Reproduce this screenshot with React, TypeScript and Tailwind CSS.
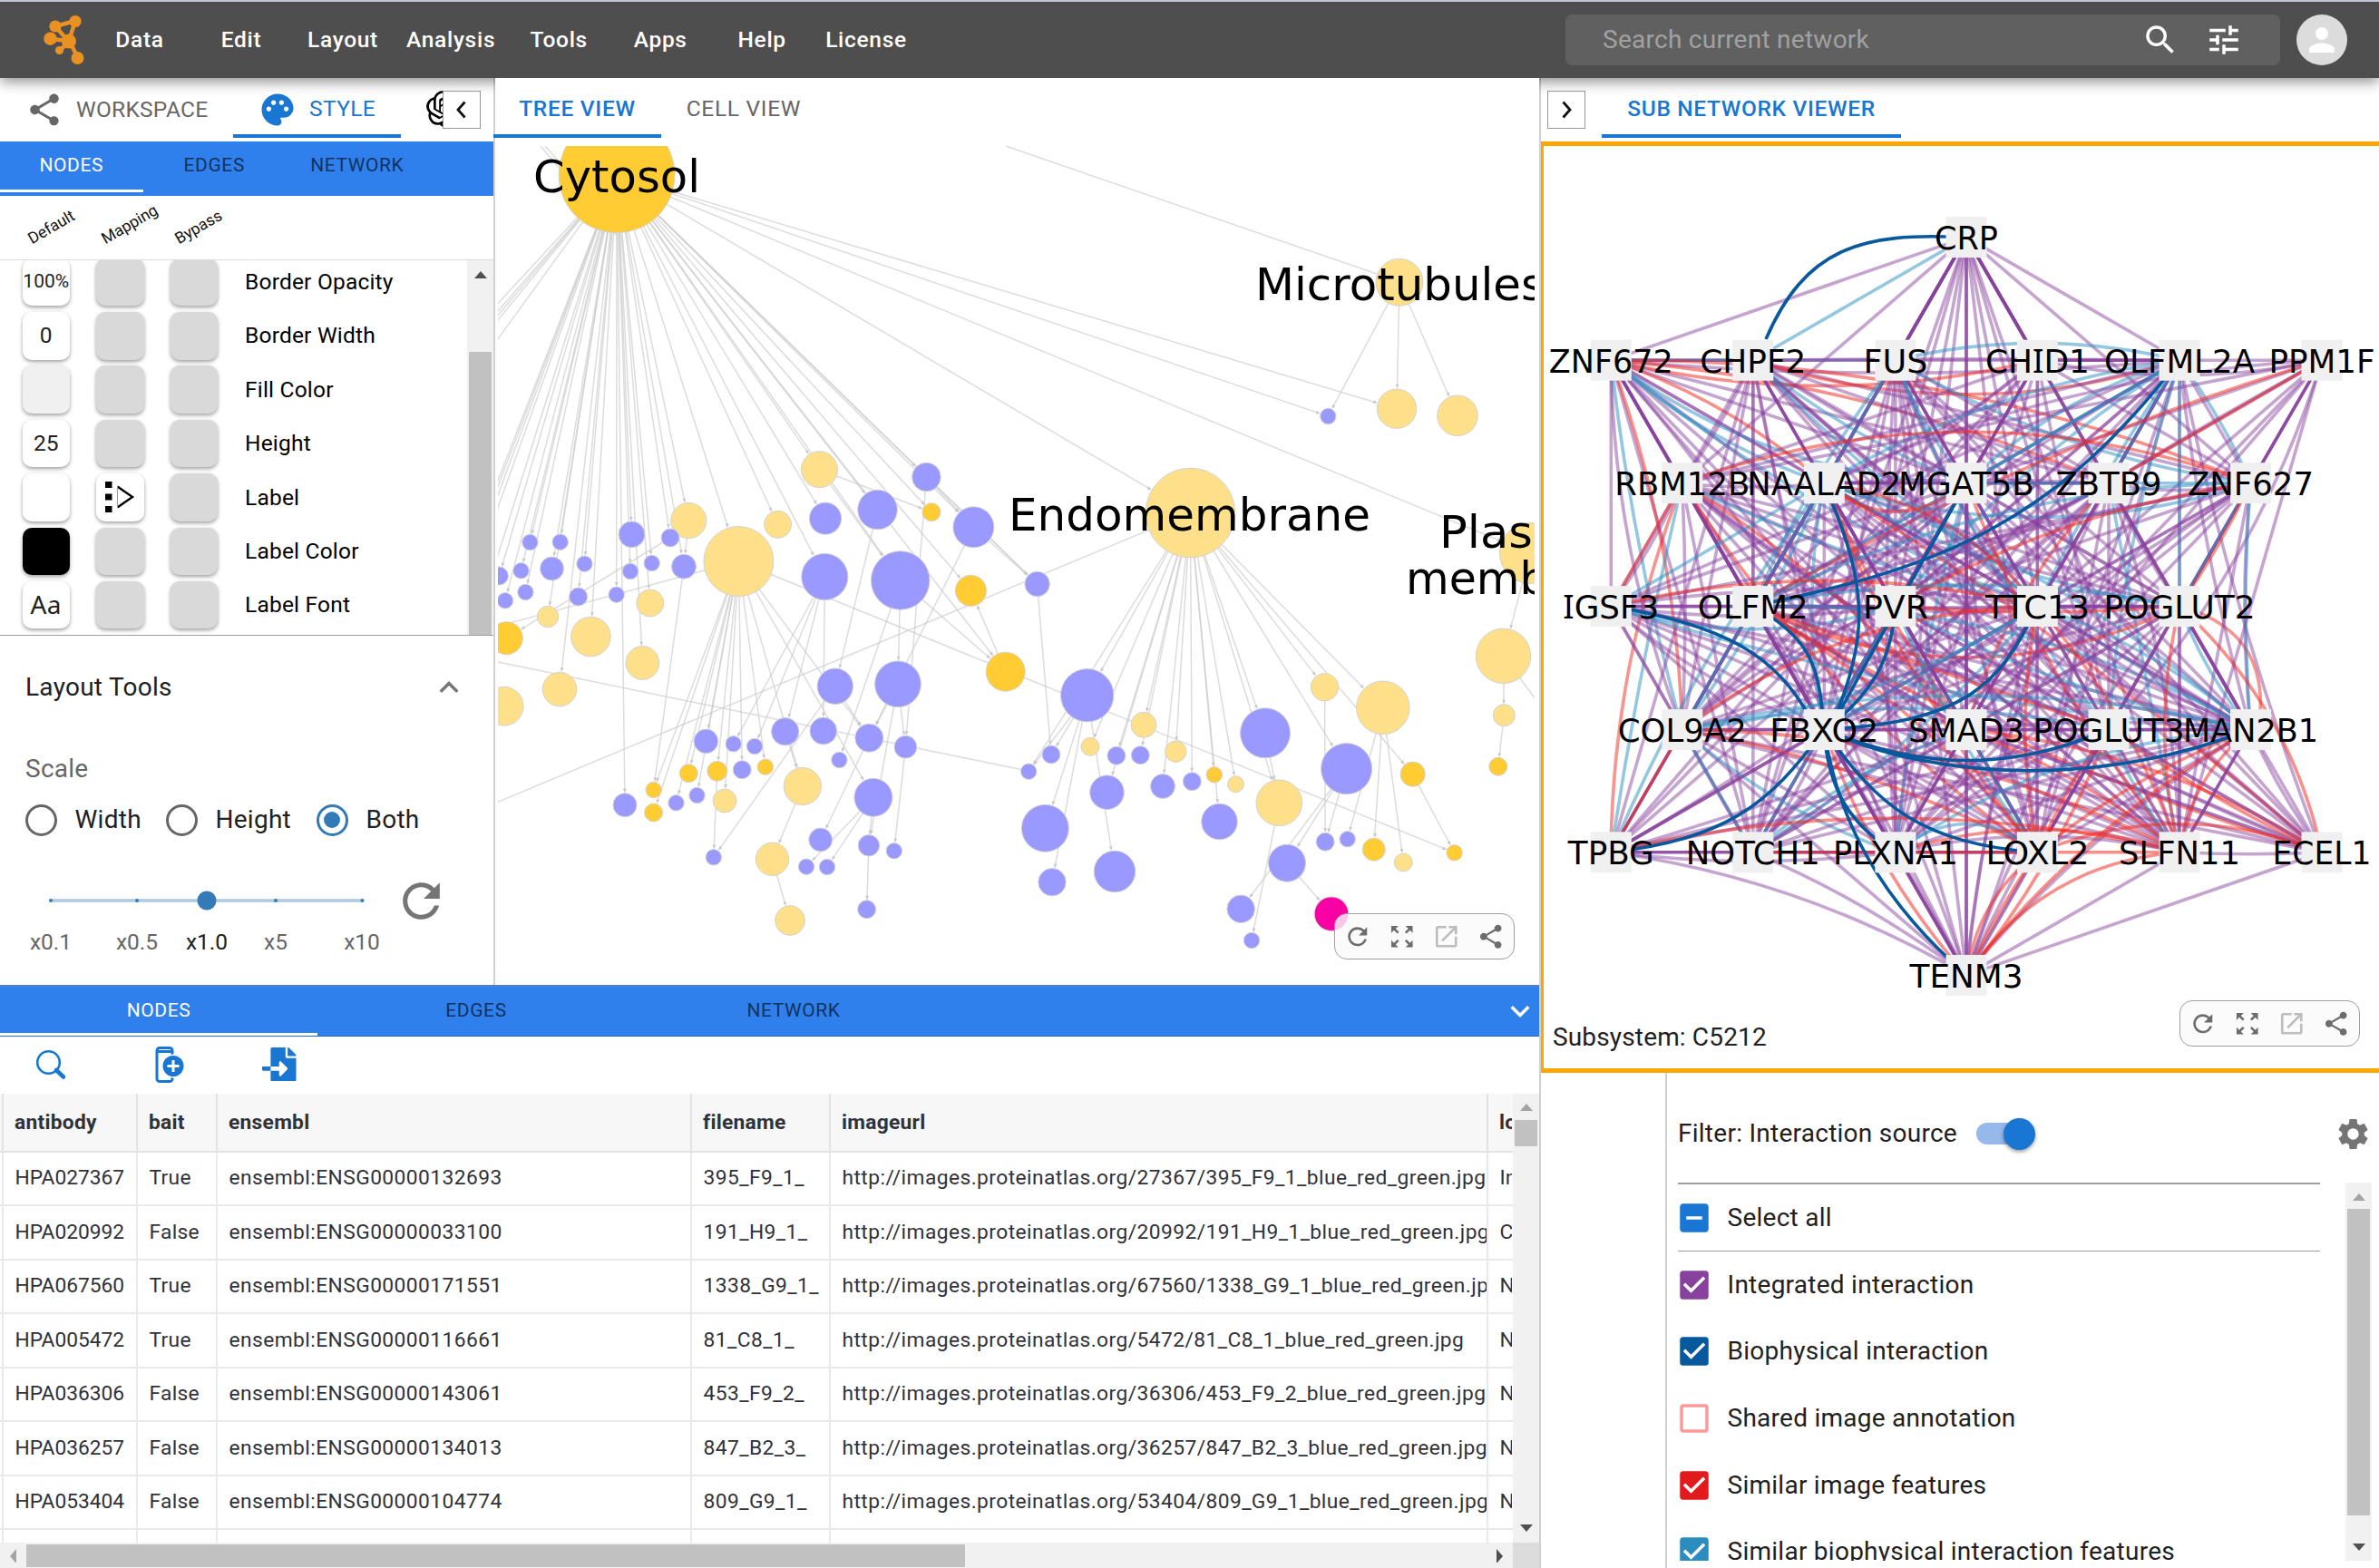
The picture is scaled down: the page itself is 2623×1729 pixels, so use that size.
import React from "react";
import {
  MdShare, MdPalette, MdSearch, MdTune, MdPerson, MdRefresh, MdZoomOutMap, MdOpenInNew, MdSettings,
  MdCheckBox, MdIndeterminateCheckBox, MdCheckBoxOutlineBlank, MdExpandLess, MdExpandMore,
} from "react-icons/md";
import { SiOpenai } from "react-icons/si";
import { FaFileImport } from "react-icons/fa";

/* ------------------------------------------------------------------ tree */

const P = "#9999ff";
const Y = "#fee08b";
const O = "#ffcc33";
const M = "#f800a3";

type TreeNode = [string, number, number, number, string];

const treeNodes: TreeNode[] = [
  ["cyt", 680, 192.7, 64, O], ["a1", 903.5, 517.7, 20, Y], ["a2", 1021.4, 526, 15.8, P], ["a3", 967.5, 562, 21.8, P],
  ["a4", 1027, 564.7, 10, O], ["a5", 1073.4, 581.3, 22.5, P], ["a6", 910, 571.7, 17.6, P], ["a7", 857.6, 578.3, 15, Y],
  ["a8", 759.3, 574, 19.6, Y], ["a9", 739, 593, 10, P], ["a10", 696.5, 589.3, 14.4, P], ["a11", 584.4, 598, 8.7, P],
  ["a12", 617.7, 597.7, 8.7, P], ["big", 814.4, 619, 38.5, Y],
  ["b1", 550.4, 635, 10, P], ["b2", 574.5, 629.3, 8.7, P], ["b3", 608.5, 627, 13, P], ["b4", 644.5, 621.7, 8.7, P],
  ["b5", 695, 630, 8.7, P], ["b6", 718.7, 621, 8.7, P], ["b7", 754, 624.7, 13.5, P], ["b8", 557, 662.3, 8.7, P],
  ["b9", 579.4, 653, 8.7, P], ["b10", 637.6, 658, 10, P], ["b11", 679.7, 655.7, 8.7, P], ["b12", 604, 680, 11.7, Y],
  ["b13", 558.4, 703.7, 18, O], ["b14", 651.4, 702, 21.8, Y], ["b15", 716.8, 665, 15, Y], ["b16", 708.4, 731, 18.4, Y],
  ["b17", 617, 760, 18.8, Y], ["b18", 555.8, 778.7, 21.3, Y], ["c1", 689, 887.7, 13, P], ["c2", 720.6, 871, 8.7, O],
  ["c3", 720.6, 896, 10, O], ["c4", 745.5, 885.3, 8.7, P], ["c5", 759.3, 852.7, 10, O], ["c6", 768.5, 877, 8.7, P],
  ["c7", 778.4, 817.3, 13.3, P], ["c8", 790.7, 850.3, 10.9, O], ["c9", 799, 883, 13, Y], ["c10", 808.7, 820.3, 8.7, P],
  ["c11", 818.2, 848.7, 10, P], ["c12", 832, 823, 8.7, P], ["c13", 843.9, 845.7, 8.7, O], ["c14", 865.7, 806.7, 15.2, P],
  ["c15", 907.8, 806, 14.9, P], ["c16", 925.4, 838, 8.7, P], ["c17", 884.8, 867, 20.6, Y], ["c18", 786.8, 945.3, 8.7, P],
  ["c19", 904.7, 926, 12.9, P], ["c20", 889, 955.7, 8.7, P], ["c21", 912, 956, 8.7, P], ["c22", 851.5, 947.3, 18.2, Y],
  ["c23", 871, 1015, 16.4, Y], ["c24", 955.6, 1002.7, 10, P], ["c25", 957.9, 932.3, 11.7, P], ["c26", 985.8, 938.3, 8.7, P],
  ["c27", 962.9, 879.3, 21, P], ["c28", 958.3, 813.7, 15.5, P], ["c29", 998.4, 823.7, 12.4, P], ["c30", 920.8, 756.7, 19.7, P],
  ["c31", 990, 754.3, 25.4, P], ["c32", 909.3, 636, 25.6, P], ["c33", 992.7, 640, 32.3, P], ["c34", 1070.4, 651.3, 17, O],
  ["c35", 1108.7, 740.7, 21.5, O], ["c36", 1134.2, 850.7, 8.7, P], ["d1", 1143.6, 644, 13.7, P], ["d2", 1198.7, 766.7, 29.2, P],
  ["d3", 1159, 832, 9.9, P], ["d4", 1202, 823.3, 10, Y], ["d5", 1230.9, 833.3, 10, P], ["d6", 1257.3, 832.7, 10, P],
  ["d7", 1261, 799.3, 14, Y], ["d8", 1220.5, 873.7, 18.8, P], ["d9", 1296.3, 828.7, 11.7, Y], ["d10", 1282, 867, 13.5, P],
  ["d11", 1314.3, 861.7, 10, P], ["d12", 1338.8, 854.3, 8.7, O], ["d13", 1362.5, 864.7, 9, Y], ["d14", 1152.4, 913.3, 26, P],
  ["d15", 1160, 972.7, 15.2, P], ["d16", 1229, 961, 22.8, P], ["d17", 1344.5, 906, 19.8, P], ["d18", 1395, 808.3, 27.5, P],
  ["d19", 1410.3, 885.3, 25.3, Y], ["d20", 1460.5, 757.7, 15.2, Y], ["d21", 1524.8, 780.3, 29.3, Y], ["d22", 1484.6, 847.7, 28.1, P],
  ["d23", 1461.2, 928.3, 10, P], ["d24", 1485.7, 925.3, 8.7, P], ["d25", 1557.7, 853.7, 13.6, O], ["d26", 1514.8, 936.7, 12.5, O],
  ["d27", 1547.3, 951, 10, Y], ["d28", 1603.6, 940.3, 8.7, O], ["d29", 1419, 951.7, 20.5, P], ["d30", 1468, 1007.7, 18.8, M],
  ["d31", 1368.2, 1002.3, 15.3, P], ["d32", 1380, 1037, 8.7, P], ["e1", 1657.5, 723.3, 30.2, Y], ["e2", 1658.3, 788.7, 12, Y],
  ["e3", 1651.8, 845.3, 10, O], ["mic", 1543, 311.3, 26, Y], ["f1", 1464.3, 459, 8.7, P], ["f2", 1540, 450.7, 21.7, Y],
  ["f3", 1607, 458.3, 22.3, Y], ["endo", 1312.4, 565.5, 49.3, Y], ["pla", 1687, 610, 33.5, Y],
];

const treeEdges: [string, string][] = [
  ["cyt", "a1 a2 a3 a4 a5 a6 a7 a8 a9 a10 a11 a12 big b1 b2 b3 b4 b5 b6 b7 b8 b9 b10 b11 b12 b14 b15 b16 b17 c1 c32 c33 c34 c35 endo pla f1 f2 d1"],
  ["a1", "a4 c33"], ["a2", "a5 d1 c29"], ["a5", "d1 c28"], ["a3", "c30"], ["a9", "b13"], ["a8", "b7"], ["b7", "c2"],
  ["big", "c2 c3 c4 c5 c6 c7 c8 c9 c11 c13 c17 c27 c28 d28"], ["c32", "c10 c12 c14 c15"], ["c33", "c31 c16 c35"],
  ["c30", "c28 c18"], ["c31", "c25 c29 c28"], ["c27", "c20 c21 c25"], ["c25", "c24"], ["c14", "c17"], ["c17", "c22"],
  ["c22", "c23"], ["c8", "c18"], ["c28", "c19"], ["c29", "c26"], ["c35", "c34"], ["d1", "d3"],
  ["endo", "d2 c36 d4 d5 d8 d7 d6 d10 d9 d11 d12 d17 d13 d18 d19 d22 d20 d21 d25"], ["d2", "c36 d3 d14 d15 d16"],
  ["d18", "d19"], ["d19", "d32"], ["d22", "d29 d23 d31"], ["d20", "d23"], ["d21", "d24 d26 d27"], ["d25", "d28"],
  ["d29", "d30"], ["mic", "f1 f2 f3"], ["pla", "e1"], ["e1", "e2"], ["e2", "e3"],
];

/* Edges whose other end lies outside the viewport. */
const looseEdges = [
  [680, 193, 530, 355], [680, 193, 530, 365], [680, 193, 530, 370], [680, 193, 530, 376], [680, 193, 530, 400],
  [680, 193, 540, 553], [680, 193, 540, 560], [680, 193, 540, 570], [680, 193, 540, 585], [680, 193, 545, 625],
  [596, 161, 680, 260], [601, 161, 680, 250], [814, 619, 540, 693], [549, 730, 1126, 848.5], [1312, 565.5, 540, 888],
  [1657, 723, 1700, 780], [1109, 161, 1518, 302],
];

const byId = new Map(treeNodes.map((n) => [n[0], n]));

function TreeGraph() {
  const lines: React.ReactNode[] = [];
  treeEdges.forEach(([from, targets]) => {
    const s = byId.get(from)!;
    targets.split(" ").forEach((id) => {
      const t = byId.get(id)!;
      const dx = t[1] - s[1];
      const dy = t[2] - s[2];
      const len = Math.hypot(dx, dy);
      const ux = dx / len;
      const uy = dy / len;
      const tx = t[1] - ux * (t[3] + 1);
      const ty = t[2] - uy * (t[3] + 1);
      const bx = tx - ux * 4;
      const by = ty - uy * 4;
      lines.push(
        <g key={from + id}>
          <line x1={s[1]} y1={s[2]} x2={tx} y2={ty} />
          <path d={`M${tx} ${ty}L${bx - uy * 2} ${by + ux * 2}L${bx + uy * 2} ${by - ux * 2}Z`} fill="#c8c8c8" stroke="none" />
        </g>,
      );
    });
  });
  return (
    <svg className="block h-[925px] w-[1143px]" viewBox="549 161 1143 925">
      <g stroke="#cccccc" strokeOpacity={0.68} strokeWidth={1.5}>
        {lines}
        {looseEdges.map(([a, b, c, d], i) => <line key={i} x1={a} y1={b} x2={c} y2={d} />)}
      </g>
      {treeNodes.map(([id, x, y, r, c]) => <circle key={id} cx={x} cy={y} r={r} fill={c} stroke="#d2d2d2" strokeWidth={1} />)}
      <g fontFamily="DejaVu Sans, sans-serif" fontSize={49.5} fill="#000">
        <text x={588} y={211.5} textLength={184} lengthAdjust="spacingAndGlyphs">Cytosol</text>
        <text x={1384} y={331} textLength={319} lengthAdjust="spacingAndGlyphs">Microtubules</text>
        <text x={1112} y={585} textLength={399} lengthAdjust="spacingAndGlyphs">Endomembrane</text>
        <text x={1587} y={604} textLength={184} lengthAdjust="spacingAndGlyphs">Plasma</text>
        <text x={1550} y={655} textLength={268} lengthAdjust="spacingAndGlyphs">membrane</text>
      </g>
    </svg>
  );
}

/* ----------------------------------------------------------- sub network */

const rowOdd = [1776.3, 1932.8, 2089.9, 2246.4, 2403, 2560];
const rowEven = [1854.8, 2011.3, 2168, 2325, 2481.5];

/* name, x, y, label width */
const genes: [string, number, number, number][] = [
  ["CRP", 2168, 261.6, 70],
  ["ZNF672", rowOdd[0], 397.2, 137], ["CHPF2", rowOdd[1], 397.2, 117], ["FUS", rowOdd[2], 397.2, 71],
  ["CHID1", rowOdd[3], 397.2, 115], ["OLFML2A", rowOdd[4], 397.2, 166], ["PPM1F", rowOdd[5], 397.2, 117],
  ["RBM12B", rowEven[0], 532.7, 149], ["NAALAD2", rowEven[1], 532.7, 170], ["MGAT5B", rowEven[2], 532.7, 150],
  ["ZBTB9", rowEven[3], 532.7, 117], ["ZNF627", rowEven[4], 532.7, 139],
  ["IGSF3", rowOdd[0], 668.6, 106], ["OLFM2", rowOdd[1], 668.6, 122], ["PVR", rowOdd[2], 668.6, 72],
  ["TTC13", rowOdd[3], 668.6, 115], ["POGLUT2", rowOdd[4], 668.6, 167],
  ["COL9A2", rowEven[0], 804.6, 142], ["FBXO2", rowEven[1], 804.6, 120], ["SMAD3", rowEven[2], 804.6, 128],
  ["POGLUT3", rowEven[3], 804.6, 167], ["MAN2B1", rowEven[4], 804.6, 149],
  ["TPBG", rowOdd[0], 939.8, 95], ["NOTCH1", rowOdd[1], 939.8, 148], ["PLXNA1", rowOdd[2], 939.8, 138],
  ["LOXL2", rowOdd[3], 939.8, 114], ["SLFN11", rowOdd[4], 939.8, 134], ["ECEL1", rowOdd[5], 939.8, 109],
  ["TENM3", 2168, 1075.4, 125],
];

const biophysical = [
  "M2168 262 C2050 255 1990 275 1947 374",
  "M2403 397 C2270 570 2150 625 1933 668",
  "M1776 668 C1900 690 1960 720 2000 800",
  "M1933 668 C1990 700 2008 730 2010 800",
  "M2011 533 C2062 650 2060 700 2020 800",
  "M2090 668 C2085 730 2065 760 2020 800",
  "M2246 668 C2205 760 2160 795 2020 804",
  "M2168 533 C2130 600 2080 690 2020 800",
  "M2011 804 C2120 850 2220 850 2325 804",
  "M2011 804 C2140 865 2330 865 2481 804",
  "M2011 804 C1950 890 1900 925 1776 940",
  "M2011 804 C2015 870 2040 910 2090 940",
  "M2011 804 C2070 890 2120 930 2246 940",
  "M2011 804 C2025 900 2070 990 2168 1075",
];

const PURPLE = "#88419d";
const RED = "#ef2b24";
const SKY = "#2b8fc2";

/* Pairs that have no integrated link. */
const absent = new Set([
  "0-6", "0-2", "1-22", "7-22", "12-22", "6-21", "6-27", "11-27", "0-22", "0-27", "0-12", "0-16", "3-11", "1-27", "6-22", "6-17", "6-12", "6-28",
]);

/* [from, to, bend] */
const redLinks: [number, number, number][] = [
  [1, 4, 0.06], [1, 11, -0.05], [1, 8, -0.05], [1, 10, -0.04], [1, 17, -0.04], [2, 5, 0.08], [6, 10, 0], [6, 13, 0.03], [11, 14, 0.05],
  [11, 7, 0.09], [11, 16, -0.02], [8, 19, 0.03], [8, 25, 0.04], [8, 15, -0.1], [13, 16, 0.12], [13, 20, 0], [13, 25, -0.05], [13, 27, 0.03],
  [15, 17, 0.08], [14, 16, 0.02], [12, 15, -0.06], [16, 27, -0.08], [16, 26, 0.06], [17, 25, -0.04], [17, 26, -0.06], [17, 22, 0],
  [21, 25, 0.04], [21, 26, 0.1], [20, 25, 0.03], [20, 27, 0.02], [19, 26, -0.04], [19, 27, -0.06], [22, 26, -0.06], [23, 24, 0], [24, 25, 0],
  [25, 26, 0], [24, 26, -0.08], [25, 27, -0.1], [25, 28, 0.1], [26, 28, 0.12], [25, 28, 0.02], [18, 28, 0.05], [7, 19, -0.04], [7, 25, 0.05], [10, 19, 0.06],
  [7, 12, 0], [8, 27, -0.02], [9, 26, 0.04], [15, 26, -0.05], [15, 25, 0.05], [20, 28, -0.04], [8, 9, 0.2], [21, 28, 0.05],
];
const skyLinks: [number, number, number][] = [
  [0, 2, 0], [1, 3, 0], [3, 5, -0.06], [1, 9, 0.08], [1, 8, 0.05], [1, 15, 0.04], [3, 8, 0], [3, 9, 0.04], [3, 13, 0.03], [3, 11, 0.05], [3, 20, 0.04],
  [5, 8, 0.05], [5, 9, 0], [5, 9, 0.06], [5, 10, 0], [5, 11, -0.03], [5, 14, 0.04], [5, 13, 0], [5, 15, 0.02], [5, 16, 0], [5, 20, 0.03], [2, 9, 0.04],
  [2, 21, 0.04], [8, 12, 0], [8, 13, 0], [8, 17, -0.03], [8, 18, 0.05], [8, 16, 0.05], [8, 21, -0.05], [8, 11, 0.08], [9, 11, 0], [11, 21, 0.02],
  [11, 16, 0], [11, 13, 0.06], [12, 14, 0.08], [12, 21, 0.03], [13, 21, -0.07], [15, 21, -0.05], [15, 18, 0], [15, 17, -0.06], [13, 17, 0], [13, 16, -0.05],
  [17, 21, -0.06], [17, 20, -0.05], [17, 24, 0.05], [17, 23, 0], [19, 23, 0.05], [15, 23, -0.04], [21, 24, 0.07], [16, 21, 0.04], [14, 21, 0.04], [20, 26, 0.04],
  [14, 23, 0], [7, 15, 0.03], [1, 17, 0.02], [10, 26, 0], [9, 24, 0.02], [7, 22, 0.01], [24, 25, -0.2], [19, 25, 0], [8, 22, 0.03], [14, 25, 0.03],
];

function SubNetwork() {
  let seed = 7;
  const rnd = () => {
    seed = (seed * 1103515245 + 12345) % 2147483648;
    return seed / 2147483648;
  };
  const edges: React.ReactNode[] = [];
  const bend = (a: number, b: number, k: number) => {
    const [, x1, y1] = genes[a];
    const [, x2, y2] = genes[b];
    const dx = x2 - x1;
    const dy = y2 - y1;
    return `M${x1} ${y1}Q${(x1 + x2) / 2 - dy * k * 2} ${(y1 + y2) / 2 + dx * k * 2} ${x2} ${y2}`;
  };
  for (let i = 0; i < genes.length; i++) {
    for (let j = i + 1; j < genes.length; j++) {
      const r1 = rnd();
      const r2 = rnd();
      const r3 = rnd();
      if (absent.has(`${i}-${j}`)) continue;
      const sameRow = genes[i][2] === genes[j][2];
      if (sameRow && j - i > 1 && r1 > 0.4) continue;
      if (i === 6 && r1 > 0.7) continue;
      if (r1 < 0.84 || i === 0) {
        const close = Math.abs(genes[i][2] - genes[j][2]) < 140 && Math.abs(genes[i][1] - genes[j][1]) < 160;
        const strong = close && r2 < 0.5;
        const curved = i > 0 && (r2 > 0.72 || (sameRow && j - i > 1));
        edges.push(
          <path key={`p${i}-${j}`} d={bend(i, j, curved ? (r3 - 0.5) * 0.12 : 0)} stroke={PURPLE} strokeOpacity={strong ? 0.9 : 0.48} />,
        );
      }
    }
    skyLinks.filter((l) => l[0] === i).forEach(([a, b, k], n) => edges.push(<path key={`s${a}-${b}-${n}`} d={bend(a, b, k)} stroke={SKY} strokeOpacity={0.5} />));
    redLinks.filter((l) => l[0] === i).forEach(([a, b, k], n) => edges.push(<path key={`r${a}-${b}-${n}`} d={bend(a, b, k)} stroke={RED} strokeOpacity={0.53} />));
  }
  return (
    <svg className="block h-[1016px] w-[921px]" viewBox="1702 161 921 1016">
      <g fill="none" strokeWidth={3.6}>
        <path d={bend(0, 3, 0)} stroke={PURPLE} />
        <path d={bend(0, 4, 0)} stroke={PURPLE} />
        <path d="M1855 533C1810 650 1778 780 1776 940" stroke={RED} strokeOpacity={0.5} />
        <path d="M2403 668C2480 690 2500 740 2490 804" stroke={RED} strokeOpacity={0.5} />
        {edges}
        <g stroke="#08589e">
          {biophysical.map((d) => <path key={d} d={d} />)}
        </g>
      </g>
      {genes.map(([n, x, y]) => <rect key={n} x={x - 22.5} y={y - 22.5} width={45} height={45} fill="#f0f0f0" />)}
      <g fontFamily="DejaVu Sans, sans-serif" fontSize={35} fill="#000">
        {genes.map(([n, x, y, w]) => (
          <text key={n} x={x - w / 2} y={y + 13.5} textLength={w} lengthAdjust="spacingAndGlyphs">
            {n.split("I").map((part, i) => (
              <React.Fragment key={i}>
                {i > 0 && <tspan fontFamily="Noto Sans, sans-serif" fontSize={35.7}>I</tspan>}
                {part}
              </React.Fragment>
            ))}
          </text>
        ))}
      </g>
    </svg>
  );
}

/* ---------------------------------------------------------------- pieces */

function ViewerToolbar({ className }: { className: string }) {
  return (
    <div className={`absolute flex h-[51px] w-[199px] items-center justify-between rounded-[14px] border border-[#a0a0a0] bg-[#fafafa]/80 px-[9px] text-[31.5px] text-[#6c6c6c] ${className}`}>
      <MdRefresh />
      <MdZoomOutMap />
      <MdOpenInNew className="text-[#bdbdbd]" />
      <MdShare />
    </div>
  );
}

function Arrow({ dir, dark }: { dir: "up" | "down" | "left" | "right"; dark?: boolean }) {
  const d = { up: "M0 9L7 1L14 9Z", down: "M0 1L7 9L14 1Z", left: "M10 -2L3 6L10 14Z", right: "M4 -2L11 6L4 14Z" }[dir];
  return (
    <svg className="h-[16px] w-[14px] shrink-0" viewBox="0 -3 14 16">
      <path d={d} fill={dark ? "#505050" : "#a3a3a3"} />
    </svg>
  );
}

function Logo() {
  return (
    <svg className="h-[60px] w-[50px]" viewBox="45 14 50 60" fill="#ea9123" stroke="#ea9123">
      <g strokeWidth={4.5}>
        <path d="M83 23L76 45M61 29L75 45M61 29L83 23M56 43L76 45M66 56L76 45M77 46L86 64" />
      </g>
      <g stroke="none">
        <circle cx={83} cy={23.5} r={6.6} />
        <circle cx={61} cy={29} r={6.6} />
        <circle cx={55.5} cy={42.7} r={7.2} />
        <circle cx={76} cy={45.5} r={8} />
        <circle cx={65.5} cy={55.5} r={4.6} />
        <circle cx={85.5} cy={64} r={7} />
      </g>
    </svg>
  );
}

const menu = ["Data", "Edit", "Layout", "Analysis", "Tools", "Apps", "Help", "License"];

function Header() {
  return (
    <header className="relative z-10 flex h-[86px] shrink-0 items-center border-t-2 border-[#c3c3da] bg-[#4e4e4e] shadow-[0_4px_14px_rgba(0,0,0,0.45)]">
      <div className="ml-[45px] w-[53px]"><Logo /></div>
      <nav className="flex flex-1">
        {menu.map((m) => (
          <div key={m} className="flex min-w-[112px] justify-center px-[14px] text-[24.5px] font-medium tracking-[0.7px] text-white">{m}</div>
        ))}
      </nav>
      <div className="flex h-[56px] w-[788px] items-center rounded-[7px] bg-[#606060] pl-[41px] text-[28px]">
        <span className="flex-1 tracking-[0.26px] text-[#a1a1a1]">Search current network</span>
        <MdSearch className="mr-[28px] text-[42px] text-white" />
        <MdTune className="mr-[41px] text-[42px] text-white" />
      </div>
      <div className="mr-[35px] ml-[18px] flex size-[56px] items-center justify-center rounded-full bg-[#dcdcdc]">
        <MdPerson className="text-[42px] text-white" />
      </div>
    </header>
  );
}

/* ------------------------------------------------------------ left panel */

const cell = "flex size-[52.5px] items-center justify-center rounded-[10px] shadow-[0_2px_4px_rgba(0,0,0,0.38)]";

const styleRows: { name: string; value?: string; tone?: string; mapped?: boolean }[] = [
  { name: "Border Opacity", value: "100%", tone: "bg-white text-[21px] text-[#222]" },
  { name: "Border Width", value: "0", tone: "bg-white text-[24.5px] text-[#222]" },
  { name: "Fill Color", tone: "bg-[#f0f0f0]" },
  { name: "Height", value: "25", tone: "bg-white text-[24.5px] text-[#222]" },
  { name: "Label", tone: "bg-white", mapped: true },
  { name: "Label Color", tone: "bg-black" },
  { name: "Label Font", value: "Aa", tone: "bg-white font-['Noto_Sans'] text-[28px] tracking-[0.5px] text-[#222] pb-[3px]" },
];

function LeftPanel() {
  return (
    <aside className="flex w-[546px] shrink-0 flex-col border-r-2 border-[#d0d0d0] bg-white">
      <div className="relative flex h-[70px] shrink-0 text-[24.5px]">
        <div className="flex h-[70px] w-[257px] items-center pl-[28px] tracking-[0.25px] text-[#666]">
          <MdShare className="mr-[14px] mb-[1px] text-[42px]" />WORKSPACE
        </div>
        <div className="flex h-[66px] w-[185px] items-center border-b-4 border-[#1976d2] pt-[7px] pl-[28px] tracking-[0.4px] text-[#1976d2]">
          <MdPalette className="mr-[14px] text-[42px]" />STYLE
        </div>
        <div className="flex h-[68px] items-center pl-[28px]"><SiOpenai className="text-[41px] text-black" /></div>
        <button className="absolute top-[14px] left-[488px] flex h-[42px] w-[42px] items-center justify-center border border-[#999] bg-white">
          <svg className="h-[20px] w-[14px]" viewBox="0 0 14 20" fill="none" stroke="#111" strokeWidth={2.8}><path d="M10.500 1.500L3 10L10.500 18.500" /></svg>
        </button>
      </div>

      <div className="flex h-[60px] shrink-0 bg-[#2f80ed] text-[21px] tracking-[0.6px] text-[#133360]">
        <div className="flex h-[56px] w-[157.5px] items-center justify-center border-b-[3px] border-white text-white">NODES</div>
        <div className="flex h-[53px] w-[157.5px] items-center justify-center">EDGES</div>
        <div className="flex h-[53px] w-[157.5px] items-center justify-center">NETWORK</div>
      </div>

      <div className="flex h-[71px] shrink-0 items-end border-b border-[#dcdcdc] pb-[14px] pl-[37px] text-[17.5px] leading-none text-[#111]">
        <span className="w-[81px] origin-bottom-left -rotate-[30deg]">Default</span>
        <span className="w-[81px] origin-bottom-left -rotate-[30deg]">Mapping</span>
        <span className="w-[81px] origin-bottom-left -rotate-[30deg]">Bypass</span>
      </div>

      <div className="flex h-[413px] shrink-0 overflow-hidden">
        <div className="-mt-[2.4px] flex-1">
          {styleRows.map((r) => (
            <div key={r.name} className="flex h-[59.4px] items-start pl-[24.500px] text-black">
              <div className={`${cell} ${r.tone}`}>{r.value}</div>
              <div className={`${cell} ml-[29px] ${r.mapped ? "bg-white" : "bg-[#d9d9d9]"}`}>
                {r.mapped && (
                  <svg className="h-[36px] w-[34px]" viewBox="0 0 34 36">
                    <path d="M1 1h7.500v7h-7.500zM1 14.500h7.500v7h-7.500zM1 28h7.500v7h-7.500z" />
                    <path d="M14.500 6.500L31 18L14.500 29.500" fill="none" stroke="#000" strokeWidth={2.4} />
                    <path d="M14.500 6V30" stroke="#999" strokeWidth={1} />
                  </svg>
                )}
              </div>
              <div className={`${cell} ml-[29px] bg-[#d9d9d9]`} />
              <div className="ml-[30px] flex h-[53.500px] items-center text-[24.5px] tracking-[0.2px]">{r.name}</div>
            </div>
          ))}
        </div>
        <div className="flex w-[29px] flex-col items-center bg-[#f1f1f1] pt-[8px]">
          <Arrow dir="up" dark />
          <div className="mt-auto h-[312px] w-[25px] shrink-0 bg-[#c1c1c1]" />
        </div>
      </div>

      <div className="flex flex-1 flex-col border-t border-[#9e9e9e] text-[28px] tracking-[0.26px] text-[#212121]">
        <div className="mt-[30px] flex h-[54px] items-center justify-between pr-[28px] pl-[28px]">
          Layout Tools<MdExpandLess className="text-[42px] text-[#757575]" />
        </div>
        <div className="mt-[42px] pl-[28px] leading-[42px] text-[#666]">Scale</div>
        <div className="mt-[14px] flex h-[42px] items-center pl-[28px]">
          <span className="mr-[19.500px] size-[35px] rounded-full border-[3.5px] border-[#666]" />
          <span className="w-[100.500px]">Width</span>
          <span className="mr-[19.500px] size-[35px] rounded-full border-[3.5px] border-[#666]" />
          <span className="w-[111px]">Height</span>
          <span className="mr-[20px] flex size-[35px] items-center justify-center rounded-full border-[3.5px] border-[#337ab7]">
            <span className="size-[18px] rounded-full bg-[#337ab7]" />
          </span>
          <span>Both</span>
        </div>
        <div className="mt-[36px] flex h-[64px] items-center pl-[54px]">
          <svg className="h-[22px] w-[348px]" viewBox="54 982 348 22" fill="#337ab7">
            <path d="M56 993H400" stroke="#adc9e3" strokeWidth={3.5} />
            <circle cx={56} cy={993} r={2} /><circle cx={151} cy={993} r={2} /><circle cx={304} cy={993} r={2} /><circle cx={399.500} cy={993} r={2} />
            <circle cx={228} cy={993} r={10.500} />
          </svg>
          <MdRefresh className="ml-[32px] text-[61px] text-[#757575]" />
        </div>
        <div className="flex h-[28px] items-center pl-[16px] text-center text-[24.5px] tracking-normal text-[#666]">
          <span className="w-[80px]">x0.1</span>
          <span className="ml-[15px] w-[80px]">x0.5</span>
          <span className="-ml-[3px] w-[80px] text-[#212121]">x1.0</span>
          <span className="-ml-[4px] w-[80px]">x5</span>
          <span className="ml-[15px] w-[80px]">x10</span>
        </div>
      </div>
    </aside>
  );
}

/* ----------------------------------------------------------------- table */

const cols = [
  "w-[148px]",
  "w-[88px] tracking-[0.3px]",
  "w-[523px] tracking-[0.44px]",
  "w-[153px] tracking-[0.45px]",
  "w-[725px] tracking-[0.44px]",
  "w-[28px]",
];
const headCols = ["w-[148px]", "w-[88px]", "w-[523px]", "w-[153px]", "w-[725px]", "w-[28px]"];
const head = ["antibody", "bait", "ensembl", "filename", "imageurl", "locus"];
const rows = [
  ["HPA027367", "True", "ensembl:ENSG00000132693", "395_F9_1_", "http://images.proteinatlas.org/27367/395_F9_1_blue_red_green.jpg", "Int"],
  ["HPA020992", "False", "ensembl:ENSG00000033100", "191_H9_1_", "http://images.proteinatlas.org/20992/191_H9_1_blue_red_green.jpg", "Cy"],
  ["HPA067560", "True", "ensembl:ENSG00000171551", "1338_G9_1_", "http://images.proteinatlas.org/67560/1338_G9_1_blue_red_green.jpg", "Nu"],
  ["HPA005472", "True", "ensembl:ENSG00000116661", "81_C8_1_", "http://images.proteinatlas.org/5472/81_C8_1_blue_red_green.jpg", "Nu"],
  ["HPA036306", "False", "ensembl:ENSG00000143061", "453_F9_2_", "http://images.proteinatlas.org/36306/453_F9_2_blue_red_green.jpg", "Nu"],
  ["HPA036257", "False", "ensembl:ENSG00000134013", "847_B2_3_", "http://images.proteinatlas.org/36257/847_B2_3_blue_red_green.jpg", "Nu"],
  ["HPA053404", "False", "ensembl:ENSG00000104774", "809_G9_1_", "http://images.proteinatlas.org/53404/809_G9_1_blue_red_green.jpg", "Nu"],
  ["", "", "", "", "", ""],
];

function TablePanel() {
  return (
    <section className="relative z-20 flex h-[643px] w-[1697px] shrink-0 flex-col bg-white">
      <div className="flex h-[57px] shrink-0 border-t-2 border-b border-t-[#4a80cc] border-b-[#2468c4] bg-[#2f80ed] text-[21px] tracking-[0.6px] text-[#133360]">
        <div className="flex w-[350px] items-center justify-center border-b-[3px] border-white pt-[2px] text-white">NODES</div>
        <div className="flex w-[350px] items-center justify-center pb-px">EDGES</div>
        <div className="flex w-[350px] items-center justify-center pb-px">NETWORK</div>
        <div className="flex flex-1 items-center justify-end text-[42px] text-white"><MdExpandMore /></div>
      </div>
      <div className="flex h-[63px] shrink-0 items-center pb-[2px]">
        <svg className="ml-[39px] h-[36px] w-[36px]" viewBox="39 1156 36 36" fill="none" stroke="#1976d2">
          <circle cx={53.500} cy={1171.500} r={12.300} strokeWidth={2.600} />
          <path d="M62 1180L70 1187.500" strokeWidth={4.500} strokeLinecap="round" />
        </svg>
        <svg className="ml-[94px] h-[40px] w-[34px]" viewBox="0 0 34 40">
          <rect x={4} y={1.500} width={17} height={37} rx={3} fill="#fff" stroke="#1976d2" strokeWidth={3} />
          <path d="M3 4h19v3H3z" fill="#1976d2" />
          <circle cx={22} cy={21.500} r={13} fill="#fff" />
          <circle cx={22} cy={21.500} r={11.500} fill="#1976d2" />
          <path d="M15.500 21.500h13M22 15v13" stroke="#fff" strokeWidth={3} />
        </svg>
        <FaFileImport className="ml-[86px] text-[37.500px] text-[#1976d2]" />
      </div>
      <div className="flex h-[495px] shrink-0">
        <div className="w-[1668px] overflow-hidden text-[22.75px] text-[#313139]">
          <div className="flex h-[64.5px] border-b-2 border-[#e3e3e5] bg-[#f7f7f8] pl-[2px] font-bold tracking-[0.28px]">
            {head.map((h, i) => (
              <div key={h} className={`${headCols[i]} flex shrink-0 items-center overflow-hidden border-l-2 border-[#e3e3e5] pt-[2px] pl-[12px]`}>{h}</div>
            ))}
          </div>
          {rows.map((r, k) => (
            <div key={k} className="flex h-[59.5px] border-b-2 border-[#e9e9eb] pl-[2px]">
              {r.map((c, i) => (
                <div key={i} className={`${cols[i]} flex shrink-0 items-center overflow-hidden border-l-2 border-[#e9e9eb] pl-[12.500px] whitespace-nowrap`}>{c}</div>
              ))}
            </div>
          ))}
        </div>
        <div className="flex w-[29px] flex-col items-center bg-[#f1f1f1] pt-[7px] pb-[8px]">
          <Arrow dir="up" />
          <div className="mt-[6px] h-[29px] w-[25px] bg-[#c1c1c1]" />
          <div className="flex-1" />
          <Arrow dir="down" dark />
        </div>
      </div>
      <div className="flex h-[28px] shrink-0 items-center bg-[#f1f1f1]">
        <div className="flex w-[29px] justify-center"><Arrow dir="left" /></div>
        <div className="h-[25px] w-[1035px] bg-[#c1c1c1]" />
        <div className="flex flex-1 justify-end pr-[8px]"><Arrow dir="right" dark /></div>
        <div className="h-[28px] w-[29px] bg-[#dcdcdc]" />
      </div>
    </section>
  );
}

/* ----------------------------------------------------------- right panel */

const sources: { name: string; color: string; off?: boolean }[] = [
  { name: "Integrated interaction", color: "text-[#88419d]" },
  { name: "Biophysical interaction", color: "text-[#08589e]" },
  { name: "Shared image annotation", color: "text-[#fb9a99]", off: true },
  { name: "Similar image features", color: "text-[#e31a1c]" },
  { name: "Similar biophysical interaction features", color: "text-[#2b8cbe]" },
];

function RightPanel() {
  return (
    <aside className="flex w-[926px] flex-col overflow-hidden border-l-2 border-[#d0d0d0] bg-white">
      <div className="flex h-[70px] shrink-0 pl-[7px]">
        <button className="mt-[14px] flex h-[42px] w-[42px] items-center justify-center border border-[#999] bg-white">
          <svg className="h-[20px] w-[14px]" viewBox="0 0 14 20" fill="none" stroke="#111" strokeWidth={2.8}><path d="M3.500 1.500L11 10L3.500 18.500" /></svg>
        </button>
        <div className="ml-[18px] flex h-[66px] w-[330px] items-center justify-center border-b-4 border-[#1976d2] pt-[7px] text-[24.5px] font-medium tracking-[0.65px] text-[#1976d2]">SUB NETWORK VIEWER</div>
      </div>
      <div className="relative -ml-[2px] h-[1027px] shrink-0 border-[5px] border-r-0 border-[#ffa500]">
        <SubNetwork />
        <div className="absolute top-[962px] left-[10px] text-[28px] leading-[42px] tracking-[0.15px] text-[#212121]">Subsystem: C5212</div>
        <ViewerToolbar className="top-[942px] left-[701px]" />
      </div>
      <div className="ml-[137px] flex flex-1 flex-col border-l-2 border-[#d0d0d0] pl-[12px] text-[28px] tracking-[0.26px] text-[#212121]">
        <div className="flex h-[121px] shrink-0 items-center pt-[13px]">
          <span>Filter: Interaction source</span>
          <div className="ml-[21px] flex h-[24.5px] w-[59px] items-center justify-end rounded-full bg-[#95b9ea]">
            <div className="-mr-[6px] size-[35px] shrink-0 rounded-full bg-[#1976d2] shadow-[0_2px_4px_rgba(0,0,0,0.4)]" />
          </div>
          <MdSettings className="mr-[8px] ml-auto text-[41px] text-[#757575]" />
        </div>
        <div className="flex h-[417px] shrink-0">
          <div className="h-[417px] w-[708px] shrink-0 overflow-hidden border-t-2 border-[#9e9e9e]">
            <div className="flex h-[74px] items-center border-b border-[#9e9e9e]">
              <MdIndeterminateCheckBox className="mr-[16px] -ml-[3.500px] text-[42px] text-[#1976d2]" />Select all
            </div>
            {sources.map((s) => (
              <div key={s.name} className="flex h-[73.6px] items-center whitespace-nowrap">
                {s.off ? (
                  <MdCheckBoxOutlineBlank className={`mr-[16px] -ml-[3.500px] text-[42px] ${s.color}`} />
                ) : (
                  <MdCheckBox className={`mr-[16px] -ml-[3.500px] text-[42px] ${s.color}`} />
                )}
                {s.name}
              </div>
            ))}
          </div>
          <div className="ml-[28px] flex w-[29px] shrink-0 flex-col items-center bg-[#f1f1f1] pt-[8px] pb-[7px]">
            <Arrow dir="up" />
            <div className="mt-[5px] h-[338px] w-[25px] bg-[#c1c1c1]" />
            <div className="flex-1" />
            <Arrow dir="down" dark />
          </div>
        </div>
      </div>
    </aside>
  );
}

export default function App() {
  return (
    <div className="flex h-[1729px] w-[2623px] flex-col overflow-hidden bg-white font-[Roboto,sans-serif]">
      <Header />
      <div className="flex flex-1">
        <div className="flex w-[1697px] shrink-0 flex-col">
          <div className="flex h-[1000px] shrink-0">
            <LeftPanel />
            <main className="relative z-20 flex w-[1151px] flex-col bg-white">
              <div className="flex h-[66px] text-[24.5px] tracking-[0.7px] text-[#666]">
                <div className="-ml-[2px] flex w-[185px] items-center justify-center border-b-4 border-[#1976d2] pt-[7px] font-medium text-[#1976d2]">TREE VIEW</div>
                <div className="flex w-[182px] items-center justify-center pt-[3px]">CELL VIEW</div>
              </div>
              <div className="mt-[9px] ml-[3px] overflow-hidden"><TreeGraph /></div>
              <ViewerToolbar className="top-[921px] left-[925px]" />
            </main>
          </div>
          <TablePanel />
        </div>
        <RightPanel />
      </div>
    </div>
  );
}
